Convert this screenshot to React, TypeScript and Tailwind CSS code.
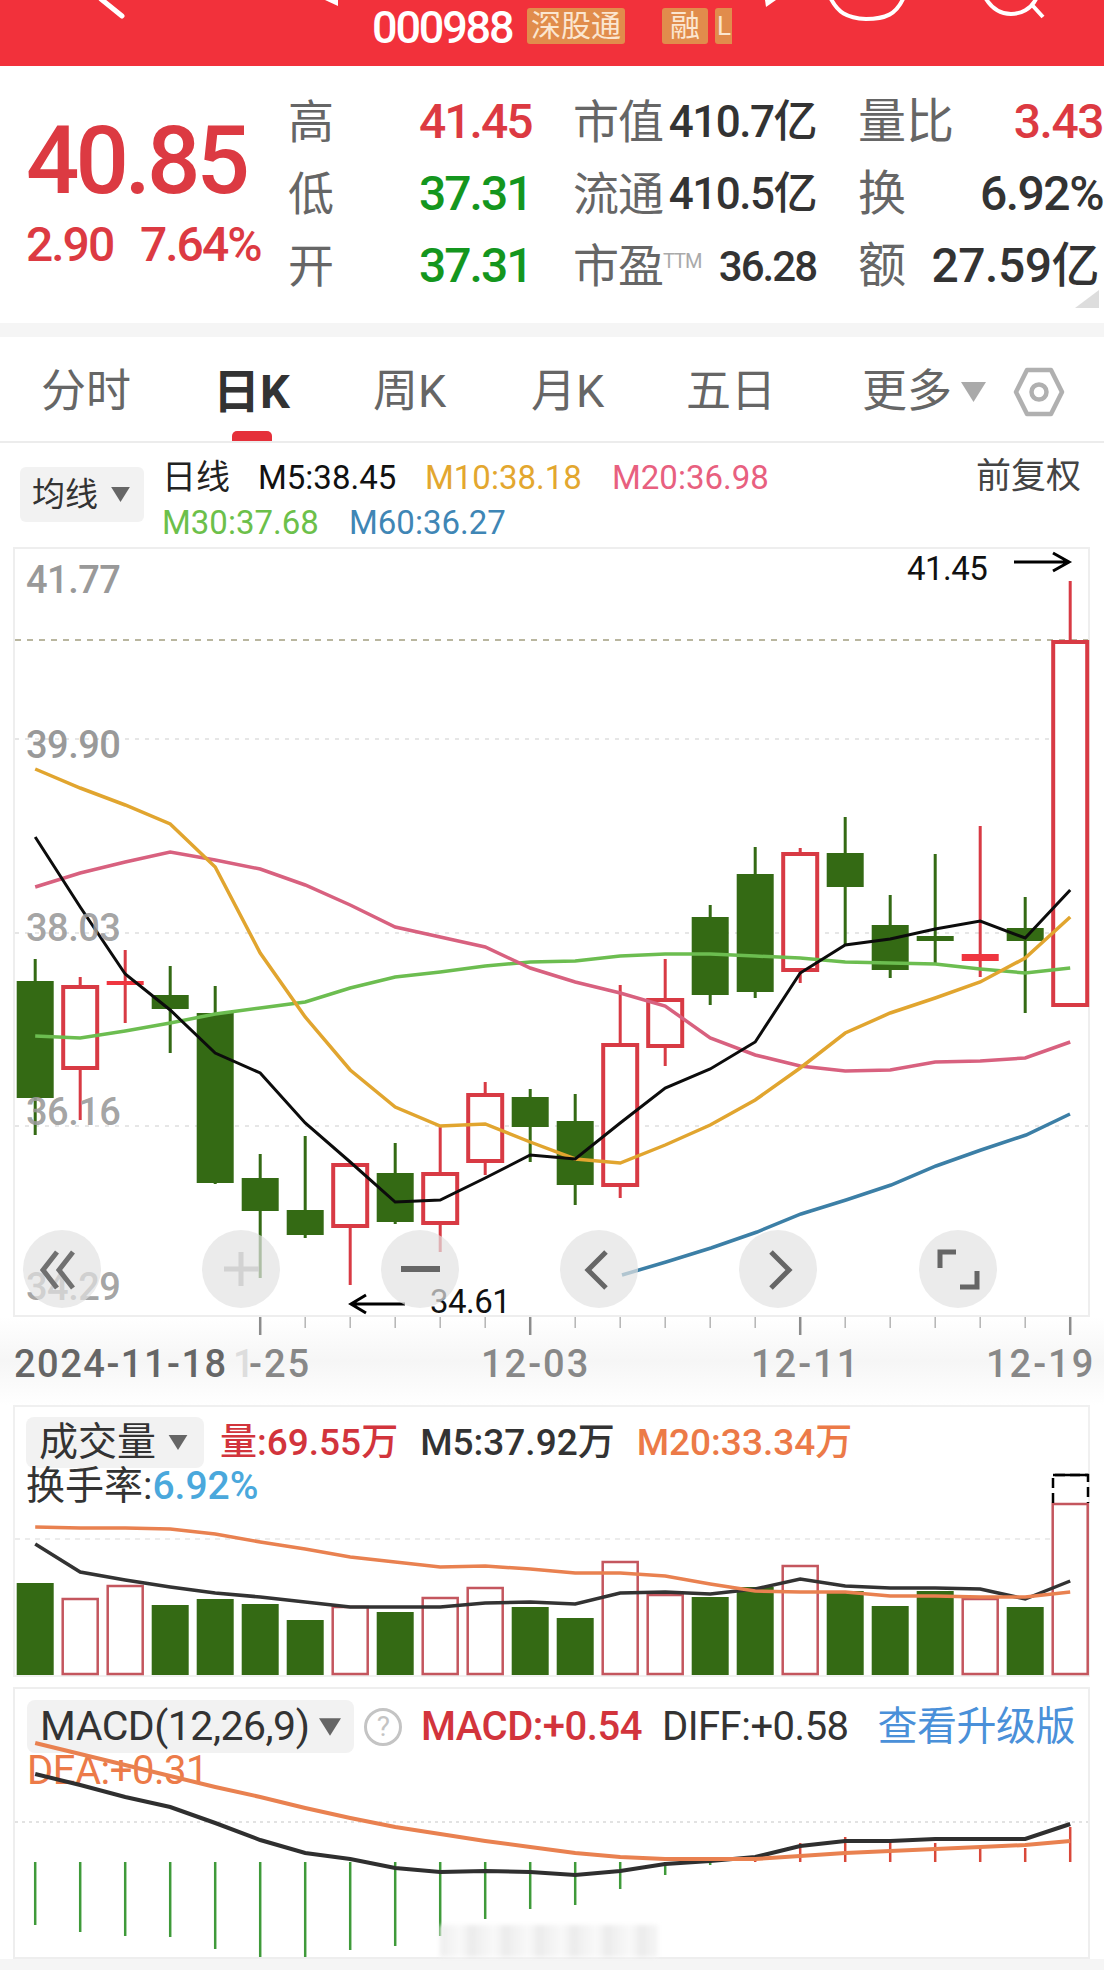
import React from 'react';

type Candle = ['g' | 'r', number, number, number, number];

const cx = (i: number) => 35.2 + 45 * i;

// wick top, body top, body bottom, wick bottom, in page pixels
const candles: Candle[] = [
  ['g', 959, 981, 1098, 1135],
  ['r', 977, 985, 1070, 1120],
  ['r', 950, 981, 985, 1023],
  ['g', 966, 995, 1009, 1053],
  ['g', 986, 1013, 1183, 1184],
  ['g', 1154, 1178, 1211, 1278],
  ['g', 1136, 1210, 1235, 1238],
  ['r', 1163, 1163, 1228, 1285],
  ['g', 1143, 1173, 1222, 1224],
  ['r', 1125, 1172, 1225, 1252],
  ['r', 1082, 1093, 1163, 1175],
  ['g', 1089, 1097, 1127, 1162],
  ['g', 1094, 1121, 1185, 1205],
  ['r', 985, 1043, 1187, 1198],
  ['r', 959, 998, 1048, 1066],
  ['g', 905, 917, 995, 1005],
  ['g', 847, 874, 992, 998],
  ['r', 848, 852, 972, 983],
  ['g', 817, 853, 887, 945],
  ['g', 895, 925, 970, 978],
  ['g', 854, 936, 941, 965],
  ['r', 826, 954, 961, 977],
  ['g', 897, 928, 941, 1013],
  ['r', 581, 640, 1007, 1007],
];

const m5 = [837, 907, 974, 1010, 1053, 1073, 1123, 1162, 1202, 1200, 1178, 1155, 1159, 1123, 1088, 1069, 1042, 973, 945, 939, 929, 921, 938, 890];
const m10 = [769, 788, 805, 824, 867, 953, 1017, 1070, 1107, 1126, 1124, 1142, 1159, 1163, 1145, 1125, 1100, 1068, 1033, 1013, 998, 982, 958, 917];
const m20 = [887, 873, 862, 852, 860, 869, 885, 905, 927, 937, 947, 968, 982, 993, 1006, 1038, 1055, 1066, 1071, 1070, 1062, 1061, 1058, 1042];
const m30 = [1036, 1038, 1031, 1023, 1014, 1008, 1002, 988, 977, 972, 966, 962, 961, 956, 954, 954, 956, 958, 962, 963, 964, 969, 973, 968];
const m60 = '622,1275 666,1262 711,1248 757,1232 801,1214 846,1200 891,1185 936,1166 981,1150 1026,1135 1070,1114';

const volTops = [1583, 1598, 1585, 1605, 1599, 1604, 1620, 1606, 1612, 1597, 1587, 1607, 1618, 1561, 1594, 1597, 1587, 1565, 1591, 1606, 1591, 1598, 1607, 1503];
const volM5 = [1544, 1572, 1580, 1587, 1593, 1597, 1602, 1607, 1607, 1607, 1603, 1602, 1604, 1593, 1592, 1594, 1589, 1579, 1586, 1588, 1588, 1589, 1599, 1581];
const volM20 = [1527, 1528, 1528, 1529, 1534, 1542, 1549, 1557, 1562, 1567, 1566, 1569, 1573, 1573, 1576, 1584, 1591, 1592, 1592, 1596, 1596, 1597, 1597, 1592];

const histEnd = [1925, 1932, 1936, 1937, 1949, 1957, 1957, 1950, 1946, 1936, 1919, 1909, 1905, 1889, 1875, 1865, 1858, 1843, 1837, 1841, 1843, 1847, 1848, 1827];
const diff = [1774, 1785, 1797, 1807, 1823, 1840, 1853, 1859, 1868, 1872, 1871, 1872, 1875, 1871, 1864, 1861, 1857, 1846, 1841, 1841, 1839, 1839, 1839, 1824];
const dea = [1743, 1754, 1765, 1776, 1787, 1797, 1808, 1818, 1827, 1834, 1841, 1847, 1853, 1857, 1859, 1859, 1859, 1856, 1853, 1851, 1849, 1847, 1845, 1841];

const pts = (ys: number[]) => ys.map((y, i) => `${cx(i)},${y}`).join(' ');

function Caret({ className }: { className: string }) {
  return (
    <svg viewBox="0 0 20 16" className={className} aria-hidden="true">
      <path d="M0 0H20L10 16Z" fill="currentColor" />
    </svg>
  );
}

function Round({ className, children }: { className: string; children: React.ReactNode }) {
  return (
    <div className={`absolute top-[681px] flex h-[78px] w-[78px] items-center justify-center rounded-full bg-[#e2e2e2]/70 ${className}`}>
      <svg viewBox="0 0 78 78" fill="none" strokeLinecap="butt" className="h-[78px] w-[78px]" aria-hidden="true">
        {children}
      </svg>
    </div>
  );
}

function QuoteRow({ label, value, color, label2, value2, label3, value3 }: {
  label: string; value: string; color: string; label2: React.ReactNode; value2: React.ReactNode; label3: string; value3: React.ReactNode;
}) {
  return (
    <div className="flex h-[72px] items-center">
      <span className="w-[131px] text-[46px] text-[#666666]">{label}</span>
      <span className={`w-[154px] text-[48px] font-medium tracking-[-2px] ${color}`}>{value}</span>
      <span className="w-[98px] whitespace-nowrap text-[46px] tracking-[-1px] text-[#666666]">{label2}</span>
      <span className="flex w-[145px] justify-end whitespace-nowrap font-medium text-[#333333]">{value2}</span>
      <span className="ml-[42px] w-[70px] whitespace-nowrap text-[48px] text-[#666666]">{label3}</span>
      <span className="flex w-[175px] justify-end whitespace-nowrap text-[48px] font-medium tracking-[-1.5px]">{value3}</span>
    </div>
  );
}

function MainChart() {
  return (
    <div className="relative ml-[13px] h-[770px] w-[1077px] shrink-0 border-2 border-[#eeeeee]">
      <svg viewBox="0 547 1104 770" className="absolute left-[-15px] top-[-2px] h-[770px] w-[1104px] max-w-none" fill="none" aria-hidden="true">
        <path d="M15 640H1088" stroke="#b9b69f" strokeWidth="2" strokeDasharray="6 6" />
        <path d="M15 739H1088M15 933H1088M15 1126H1088" stroke="#e6e6e6" strokeWidth="2" strokeDasharray="4 6" />
        {candles.map(([t, wt, bt, bb, wb], i) => {
          const x = cx(i);
          const col = t === 'g' ? '#346a14' : '#d83a44';
          const thin = bb - bt < 10;
          return (
            <g key={i}>
              <path d={`M${x} ${wt}V${bt}M${x} ${bb}V${wb}`} stroke={col} strokeWidth="3" />
              {t === 'g' || thin ? (
                <rect x={x - 18.5} y={bt} width="37" height={bb - bt} fill={t === 'g' ? col : '#ef3640'} />
              ) : (
                <rect x={x - 17} y={bt + 2} width="34" height={bb - bt - 4} stroke={col} strokeWidth="4" fill="#ffffff" />
              )}
            </g>
          );
        })}
        <polyline points={pts(m30)} stroke="#6cbd50" strokeWidth="3.5" />
        <polyline points={pts(m20)} stroke="#d8617f" strokeWidth="3.5" />
        <polyline points={pts(m10)} stroke="#e1a52f" strokeWidth="3.5" />
        <polyline points={m60} stroke="#3c7fa6" strokeWidth="3.5" />
        <polyline points={pts(m5)} stroke="#0c0c0c" strokeWidth="3" />
        <path d="M1014 562H1068M1053 553L1069 562L1053 571" stroke="#000000" strokeWidth="3" />
        <path d="M405 1304H351M366 1295L351 1304L366 1313" stroke="#000000" strokeWidth="3" />
      </svg>
      <span className="absolute left-[11px] top-[12px] text-[38px] font-medium leading-none tracking-[-0.5px] text-[#999999]">41.77</span>
      <span className="absolute left-[11px] top-[177px] text-[38px] font-medium leading-none tracking-[-0.5px] text-[#999999]">39.90</span>
      <span className="absolute left-[11px] top-[360px] text-[38px] font-medium leading-none tracking-[-0.5px] text-[#999999]/90">38.03</span>
      <span className="absolute left-[11px] top-[544px] text-[38px] font-medium leading-none tracking-[-0.5px] text-[#999999]/90">36.16</span>
      <span className="absolute left-[11px] top-[719px] text-[38px] font-medium leading-none tracking-[-0.5px] text-[#999999]/90">34.29</span>
      <span className="absolute left-[892px] top-[3px] text-[33px] leading-none tracking-[-0.5px] text-[#111111]">41.45</span>
      <span className="absolute left-[415px] top-[736px] text-[33px] leading-none tracking-[-0.5px] text-[#111111]">34.61</span>
      <Round className="left-[8px]">
        <path d="M34 22L20 40L34 58M50 22L36 40L50 58" stroke="#707070" strokeWidth="5" />
      </Round>
      <Round className="left-[187px]">
        <path d="M22 39H57M39 22V56" stroke="#d2d2d2" strokeWidth="5" />
      </Round>
      <Round className="left-[366px]">
        <path d="M20 39H59" stroke="#666666" strokeWidth="6" />
      </Round>
      <Round className="left-[545px]">
        <path d="M46 22L28 40L46 58" stroke="#666666" strokeWidth="5" />
      </Round>
      <Round className="left-[724px]">
        <path d="M32 22L50 40L32 58" stroke="#666666" strokeWidth="5" />
      </Round>
      <Round className="left-[904px]">
        <path d="M37 22H21V38M41 57H58V41" stroke="#666666" strokeWidth="5" />
      </Round>
    </div>
  );
}

function DateAxis() {
  return (
    <div className="relative h-[88px] shrink-0 bg-gradient-to-b from-white via-[#f6f6f6] to-white">
      <svg viewBox="0 1317 1104 20" className="block h-[20px] w-[1104px]" fill="none" aria-hidden="true">
        {candles.map((_, i) => {
          if (i < 5) return null;
          const long = (i - 5) % 6 === 0;
          return <path key={i} d={`M${cx(i)} 1317V${long ? 1335 : 1328}`} stroke={long ? '#8c8c8c' : '#b5b5b5'} strokeWidth={long ? 2.5 : 1.5} />;
        })}
      </svg>
      <div className="flex items-center whitespace-nowrap pl-[14px] pt-[8px] text-[38px] font-medium leading-none tracking-[2px] text-[#888888]">
        <span className="w-[219px] tracking-[1.5px] text-[#666666]">2024-11-18</span>
        <span className="w-[10px] text-[#dddddd]">1</span>
        <span className="w-[238px] pl-[6px]">-25</span>
        <span className="w-[270px]">12-03</span>
        <span className="w-[235px]">12-11</span>
        <span>12-19</span>
      </div>
    </div>
  );
}

function VolumePanel() {
  return (
    <div className="relative ml-[13px] h-[272px] w-[1077px] shrink-0 border-2 border-[#f0f0f0] pl-[11px] pt-[10px]">
      <div className="flex items-center whitespace-nowrap text-[37px] font-medium leading-none">
        <div className="flex h-[51px] w-[178px] items-center rounded-[8px] bg-[#f2f2f2] pl-[13px]">
          <span className="text-[39px] font-normal text-[#333333]">成交量</span>
          <Caret className="ml-[12px] h-[15px] w-[20px] text-[#666666]" />
        </div>
        <span className="ml-[16px] text-[#d2343c]">量:69.55万</span>
        <span className="ml-[22px] text-[#333333]">M5:37.92万</span>
        <span className="ml-[22px] text-[#ec7a48]">M20:33.34万</span>
      </div>
      <div className="-mt-[2px] flex h-[40px] items-center whitespace-nowrap text-[39px] leading-none">
        <span className="text-[#333333]">换手率:</span>
        <span className="font-medium text-[#4aa8dc]">6.92%</span>
      </div>
      <svg viewBox="0 1405 1104 272" className="absolute left-[-15px] top-[-2px] h-[272px] w-[1104px] max-w-none" fill="none" aria-hidden="true">
        <path d="M15 1539H1088" stroke="#e6e6e6" strokeWidth="1.5" strokeDasharray="5 5" />
        {volTops.map((top, i) => {
          const x = cx(i);
          return candles[i][0] === 'g' ? (
            <rect key={i} x={x - 18.5} y={top} width="37" height={1675 - top} fill="#346a14" />
          ) : (
            <rect key={i} x={x - 17.5} y={top + 1} width="35" height={1675 - top - 2} stroke="#c4565e" strokeWidth="2.5" fill="#ffffff" />
          );
        })}
        <path d="M1053 1503V1475H1088V1503" stroke="#000000" strokeWidth="2.5" strokeDasharray="10 5" />
        <path d="M1053 1475H1088" stroke="#000000" strokeWidth="2.5" />
        <polyline points={pts(volM5)} stroke="#333333" strokeWidth="3.5" />
        <polyline points={pts(volM20)} stroke="#e98150" strokeWidth="3.5" />
      </svg>
    </div>
  );
}

function MacdPanel() {
  return (
    <div className="relative ml-[13px] mt-[10px] h-[272px] w-[1077px] shrink-0 border-2 border-[#eeeeee] pl-[12px] pt-[11px]">
      <div className="flex items-center whitespace-nowrap text-[40px] leading-none tracking-[-0.5px]">
        <div className="flex h-[53px] w-[327px] items-center rounded-[8px] bg-[#f2f2f2] pl-[13px]">
          <span className="text-[41px] text-[#333333]">MACD(12,26,9)</span>
          <Caret className="ml-auto mr-[13px] h-[18px] w-[22px] text-[#666666]" />
        </div>
        <div className="ml-[10px] flex h-[38px] w-[38px] items-center justify-center rounded-full border-[3px] border-[#c4c4c4] text-[28px] text-[#c4c4c4]">?</div>
        <span className="ml-[19px] font-medium text-[#d2343c]">MACD:+0.54</span>
        <span className="ml-[20px] text-[#333333]">DIFF:+0.58</span>
        <span className="ml-[29px] text-[#4a90d9]">查看升级版</span>
      </div>
      <div className="flex h-[36px] items-center text-[40px] leading-none tracking-[-0.5px] text-[#ec7a48]">DEA:+0.31</div>
      <svg viewBox="0 1687 1104 272" className="absolute left-[-15px] top-[-2px] h-[272px] w-[1104px] max-w-none" fill="none" aria-hidden="true">
        <path d="M15 1822H1088" stroke="#d9d9d9" strokeWidth="1.5" strokeDasharray="3 4" />
        {histEnd.map((end, i) => (
          <path key={i} d={`M${cx(i)} 1862V${end}`} stroke={i < 16 ? '#3f9a3a' : '#d9483a'} strokeWidth="2.5" />
        ))}
        <polyline points={pts(diff)} stroke="#2f2f2f" strokeWidth="4" />
        <polyline points={pts(dea)} stroke="#e98150" strokeWidth="4" />
      </svg>
      <div className="absolute left-[425px] top-[236px] h-[32px] w-[218px] bg-[repeating-linear-gradient(90deg,#eeeeee_0px,#f9f9f9_20px,#e9e9e9_34px)] blur-[2px]" />
    </div>
  );
}

export default function App() {
  return (
    <div className="flex h-[1970px] w-[1104px] flex-col overflow-hidden bg-white font-['Roboto','Noto_Sans_CJK_SC',sans-serif]">
      {/* top bar, cut off by the capture */}
      <div className="relative flex h-[66px] shrink-0 items-start bg-[#f2313b] pl-[372px] pt-[6px]">
        <svg viewBox="0 0 1104 66" className="absolute left-0 top-0 h-[66px] w-[1104px] max-w-none" fill="none" aria-hidden="true">
          <path d="M101 -1L122 16" stroke="#ffffff" strokeWidth="5" strokeLinecap="round" />
          <path d="M325 0H338V6Z" fill="#ffffff" />
          <path d="M765 0H776L766 7Z" fill="#ffffff" />
          <path d="M831 -1C838 12 846 18 866 19C886 19 896 14 903 -1" stroke="#ffffff" strokeWidth="4" />
          <path d="M986 -1C993 10 1001 14 1011 14C1021 14 1031 9 1036 -1M1033 6L1043 17" stroke="#ffffff" strokeWidth="4" />
        </svg>
        <span className="w-[141px] text-[45px] font-medium leading-[44px] tracking-[-2.2px] text-white">000988</span>
        <span className="ml-[14px] mt-[2px] flex h-[36px] w-[98px] items-center justify-center rounded-[3px] bg-[#e18c4c] text-[30px] leading-none text-[#fbe6d0]">深股通</span>
        <span className="ml-[37px] mt-[2px] flex h-[36px] w-[46px] items-center justify-center rounded-[3px] bg-[#e18c4c] text-[30px] leading-none text-[#fbe6d0]">融</span>
        <span className="ml-[7px] mt-[2px] flex h-[36px] w-[17px] items-center justify-end overflow-hidden rounded-l-[3px] bg-[#e18c4c] pr-[1px] text-[26px] leading-none text-[#fbe6d0]">L</span>
      </div>

      {/* quote */}
      <div className="relative flex h-[257px] shrink-0 pl-[26px]">
        <div className="w-[262px] shrink-0 whitespace-nowrap pt-[48px] font-medium leading-none text-[#dc3a42]">
          <div className="text-[94px] tracking-[-4px]">40.85</div>
          <div className="mt-[13px] flex text-[48px] tracking-[-2px]">
            <span className="w-[114px]">2.90</span>
            <span>7.64%</span>
          </div>
        </div>
        <div className="pt-[20px]">
          <QuoteRow label="高" value="41.45" color="text-[#dc3a42]" label2="市值" value2={<span className="text-[44px] tracking-[-1.5px]">410.7亿</span>} label3="量比" value3={<span className="text-[#dc3a42]">3.43</span>} />
          <QuoteRow label="低" value="37.31" color="text-[#14961e]" label2="流通" value2={<span className="text-[44px] tracking-[-1.5px]">410.5亿</span>} label3="换" value3={<span className="text-[#333333]">6.92%</span>} />
          <QuoteRow
            label="开"
            value="37.31"
            color="text-[#14961e]"
            label2={<>市盈<span className="relative -top-[14px] text-[20px] tracking-[-1px] text-[#aaaaaa]">TTM</span></>}
            value2={<span className="text-[42px] tracking-[-2px]">36.28</span>}
            label3="额"
            value3={<span className="pr-[4px] text-[48px] tracking-[-0.5px] text-[#333333]">27.59亿</span>}
          />
        </div>
        <svg viewBox="0 0 24 18" className="absolute left-[1075px] top-[224px] h-[18px] w-[24px]" aria-hidden="true">
          <path d="M24 0V18H0Z" fill="#dddddd" />
        </svg>
      </div>
      <div className="h-[14px] shrink-0 bg-[#f5f5f5]" />

      {/* period tabs */}
      <div className="relative flex h-[106px] shrink-0 items-center whitespace-nowrap border-b-2 border-[#ececec] pl-[41px] pt-[5px] text-[45px] leading-none text-[#666666]">
        <span className="w-[172px]">分时</span>
        <span className="w-[160px] text-[47px] font-bold text-[#333333]">日K</span>
        <span className="w-[158px]">周K</span>
        <span className="w-[155px]">月K</span>
        <span className="w-[176px]">五日</span>
        <span className="w-[99px]">更多</span>
        <Caret className="h-[20px] w-[25px] text-[#aaaaaa]" />
        <svg viewBox="0 0 52 50" fill="none" className="ml-[27px] h-[50px] w-[52px]" aria-hidden="true">
          <path d="M14 3H38L49 25L38 47H14L3 25Z" stroke="#b0b0b0" strokeWidth="4.5" strokeLinejoin="round" />
          <circle cx="26" cy="25" r="7.5" stroke="#b0b0b0" strokeWidth="4.5" />
        </svg>
        <div className="absolute bottom-0 left-[232px] h-[10px] w-[40px] rounded-t-[5px] bg-[#e5303a]" />
      </div>

      {/* moving average legend */}
      <div className="flex h-[104px] shrink-0 items-start whitespace-nowrap pl-[20px] pt-[12px] text-[33px] leading-none">
        <div className="mt-[12px] flex h-[55px] w-[124px] items-center rounded-[6px] bg-[#f2f2f2] pl-[12px]">
          <span className="text-[33px] text-[#333333]">均线</span>
          <Caret className="ml-[13px] h-[15px] w-[19px] text-[#666666]" />
        </div>
        <div className="ml-[18px] flex w-[630px] flex-col">
          <div className="flex h-[44px] items-center">
            <span className="w-[96px] text-[34px] text-[#222222]">日线</span>
            <span className="w-[167px] text-[#111111]">M5:38.45</span>
            <span className="w-[187px] text-[#e3a72f]">M10:38.18</span>
            <span className="text-[#e8607f]">M20:36.98</span>
          </div>
          <div className="flex h-[46px] items-center">
            <span className="w-[187px] text-[#6cc04a]">M30:37.68</span>
            <span className="text-[#3f86b5]">M60:36.27</span>
          </div>
        </div>
        <span className="ml-[184px] mt-[4px] text-[35px] text-[#444444]">前复权</span>
      </div>

      <MainChart />
      <DateAxis />
      <VolumePanel />
      <MacdPanel />
      <div className="flex-1 bg-[#f5f5f5]" />
    </div>
  );
}
